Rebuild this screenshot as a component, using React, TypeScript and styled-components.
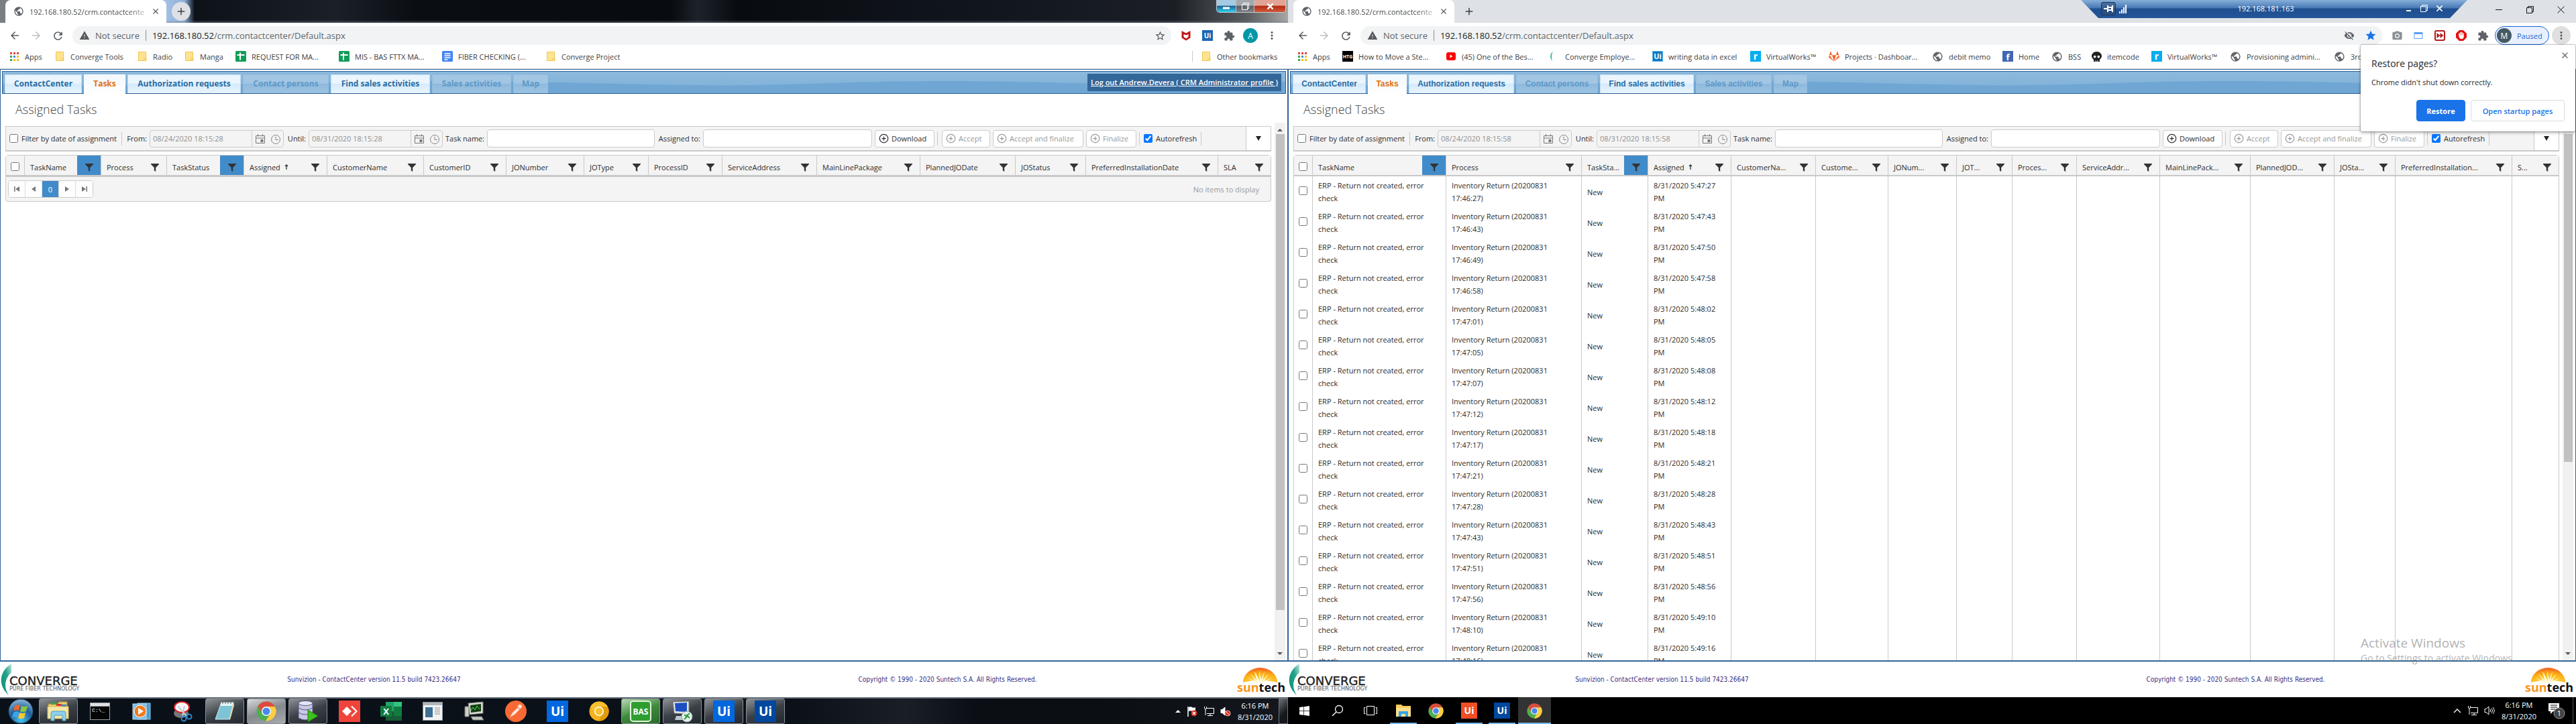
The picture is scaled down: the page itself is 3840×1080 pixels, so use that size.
import React from "react";
import styled, { createGlobalStyle, css } from "styled-components";
import {
  MdArrowBack, MdArrowForward, MdRefresh, MdWarning, MdStarBorder, MdStar, MdExtension, MdMoreVert,
  MdClose, MdAdd, MdVisibilityOff, MdPhotoCamera, MdPublic,
} from "react-icons/md";
import { FaGitlab, FaWindows, FaSkull } from "react-icons/fa";
import { CirclePlus } from "lucide-react";

const ui = '"Open Sans", "Noto Sans", sans-serif';
const navy = "#336699";
const line = "#c9c9c9";

const Global = createGlobalStyle`
  * { box-sizing: border-box; }
  html, body { margin: 0; background: #fff; }
  body { font: 11px/19px ${ui}; color: #2c2c2c; }
  button, input { font: inherit; }
  button { cursor: pointer; }
  svg { display: block; flex: none; }
`;

/* ---------- desktops ---------- */
const Desktops = styled.main`
  display: grid;
  grid-template-columns: minmax(0, 1fr) minmax(0, 1fr);
  height: 100vh;
  overflow: hidden;
`;
const Desktop = styled.section`
  position: relative;
  display: flex;
  flex-direction: column;
  min-width: 0;
  min-height: 0;
`;

/* ---------- tab strip ---------- */
const TabStrip = styled.header<{ $glass?: boolean }>`
  display: flex;
  flex: none;
  height: 34px;
  padding-left: 8px;
  background: ${(p) => p.$glass
    ? "linear-gradient(to bottom, transparent 30px, rgba(110,130,150,.5)), linear-gradient(90deg, #7b7e80 0, #7b7e80 8px, #a9c5e6 240px, #8fb0d8 275px, #0d1219 290px, #1b2028 500px, #0a0e13 620px, #080b0f 1000px, #1d222a 1040px, #080c11 1100px, #12171e 1500px, #1b1f25 1750px, #5b5e60 1860px, #a7a7a6 1920px)"
    : "#dee1e6"};
`;
const BrowserTab = styled.div`
  display: flex;
  align-items: center;
  gap: 8px;
  width: 240px;
  padding: 0 9px 0 12px;
  background: #fff;
  border-radius: 8px 8px 0 0;
  color: #45494d;
`;
const TabTitle = styled.span`
  flex: 1;
  white-space: nowrap;
  mask-image: linear-gradient(90deg, #000 85%, rgba(0, 0, 0, .3));
`;
const BareButton = styled.button`
  display: grid;
  place-items: center;
  padding: 0;
  border: 0;
  background: none;
  color: inherit;
`;
const NewTab = styled(BareButton)<{ $glass?: boolean }>`
  width: 28px;
  height: 28px;
  margin: 3px 0 0 8px;
  border-radius: 50%;
  background: ${(p) => (p.$glass ? "#dee1e6" : "transparent")};
  color: #3c4043;
`;
const Push = styled.span`flex: 1;`;

const AeroButtons = styled.div`
  display: flex;
  height: 19px;
  margin-right: 3px;
  border: 1px solid #c5cbd0;
  border-top: 0;
  border-radius: 0 0 5px 5px;
  overflow: hidden;
`;
const AeroButton = styled(BareButton)<{ $kind: "min" | "max" | "close" }>`
  width: ${(p) => ({ min: 29, max: 27, close: 46 })[p.$kind]}px;
  border-right: ${(p) => (p.$kind === "close" ? 0 : "1px solid #b9c0c6")};
  color: #fff;
  background: ${(p) => ({
    min: "linear-gradient(#a4cbe2 0 45%, #1b5f93 50%, #2fd0f0)",
    max: "linear-gradient(#a3a8ad 0 45%, #5a5f64 50%, #7d8185)",
    close: "linear-gradient(#e2a595 0 45%, #b52a12 50%, #cf5a3c)",
  })[p.$kind]};
`;
const FlatButtons = styled.div`
  display: flex;
  align-items: center;
  height: 28px;
  color: #111;
`;
const FlatButton = styled(BareButton)`
  width: 46px;
  height: 28px;
`;

/* ---------- browser toolbar ---------- */
const NavBar = styled.div`
  display: flex;
  flex: none;
  align-items: center;
  height: 36px;
  padding: 2px 8px 0 6px;
  background: #fff;
  color: #5f6368;
`;
const NavButton = styled(BareButton)<{ $faded?: boolean; $disc?: boolean }>`
  width: ${(p) => (p.$disc ? 28 : 32)}px;
  height: 28px;
  border-radius: 50%;
  color: ${(p) => (p.$faded ? "#bcbec0" : "#55595d")};
  background: ${(p) => (p.$disc ? "#dfdfdf" : "none")};
`;
const Omnibox = styled.div`
  display: flex;
  flex: 1;
  align-items: center;
  height: 28px;
  margin: 0 6px 0 6px;
  padding: 0 1px 0 10px;
  border-radius: 14px;
  background: #f1f3f4;
  font-size: 13px;
`;
const Secure = styled.span`
  padding: 0 9px 0 8px;
  border-right: 1px solid #8c9094;
  line-height: 16px;
  white-space: nowrap;
`;
const Address = styled.input`
  flex: 1;
  min-width: 0;
  padding: 0;
  border: 0;
  outline: 0;
  background: none;
  color: #5f6368;
`;
const AddressHost = styled.span`
  padding-left: 9px;
  color: #202124;
`;
const Extension = styled(BareButton)`
  width: 32px;
  height: 28px;
`;
const Avatar = styled.span<{ $color: string }>`
  display: grid;
  place-items: center;
  width: 22px;
  height: 22px;
  border-radius: 50%;
  background: ${(p) => p.$color};
  color: #fff;
  font-size: 12px;
`;
const Paused = styled.button`
  display: flex;
  align-items: center;
  gap: 8px;
  width: 81px;
  height: 28px;
  margin: 0 4px 0 2px;
  padding: 0 2px;
  border: 1px solid #1967d2;
  border-radius: 14px;
  background: #e8f0fe;
  color: #1967d2;
`;

/* ---------- bookmarks ---------- */
const Bookmarks = styled.nav`
  display: flex;
  flex: none;
  align-items: center;
  gap: 16px;
  height: 33px;
  padding: 0 14px 4px 13px;
  overflow: hidden;
  border-bottom: 1px solid #d4d6d8;
  background: #fff;
`;
const Bookmark = styled.a`
  display: flex;
  flex: none;
  align-items: center;
  gap: 8px;
  color: #3c4043;
  text-decoration: none;
  white-space: nowrap;
`;
const BookmarkText = styled.span<{ $w: number }>`
  width: ${(p) => p.$w}px;
`;
const BookmarkRule = styled.span`
  width: 1px;
  height: 16px;
  margin-right: -4px;
  background: #c6c9cc;
`;

/* ---------- application ---------- */
const Frame = styled.div`
  display: flex;
  flex: 1;
  flex-direction: column;
  min-height: 0;
  border: 1px solid ${navy};
  border-bottom-width: 2px;
  background: #fff;
`;
const AppTabs = styled.nav<{ $arial?: boolean }>`
  position: relative;
  display: flex;
  flex: none;
  align-items: flex-end;
  height: 34px;
  margin: 2px 2px 0;
  padding: 0 3px;
  border: 1px solid #2d6096;
  background: linear-gradient(#8cb9dc, #7eb0d8);
  font: bold 12px/26px ${(p) => (p.$arial ? '"Liberation Sans", Arial, sans-serif' : ui)};
`;
const WaveArt = styled.svg`
  position: absolute;
  inset: 0;
  width: 100%;
  height: 100%;
`;
const AppTab = styled.a<{ $state?: "active" | "off"; $w: number }>`
  position: relative;
  width: ${(p) => p.$w}px;
  height: 28px;
  margin-right: 3px;
  border: 1px solid #c4ddf2;
  border-bottom: 0;
  background: linear-gradient(#eaf5fe 0 45%, #d5eafb 50%, #e9f5ff);
  color: #2a6da3;
  text-align: center;
  text-decoration: none;
  white-space: nowrap;
  ${(p) => p.$state === "active" && css`
    height: 29px;
    margin-bottom: -1px;
    border-color: #fff;
    background: linear-gradient(#f2f8fd, #fff);
    color: #e2700d;
  `}
  ${(p) => p.$state === "off" && css`
    border-color: #93bddf;
    background: linear-gradient(#a3c6e3 0 45%, #8fbadd 50%, #9cc3e2);
    color: #5d99c8;
  `}
`;
const LogOut = styled.a`
  position: relative;
  align-self: center;
  height: 26px;
  margin: 0 3px 0 auto;
  padding: 0 5px;
  background: ${navy};
  color: #fff;
  font: 600 11px/26px ${ui};
  white-space: nowrap;
`;
const Heading = styled.h1`
  flex: none;
  height: 43px;
  margin: 0;
  padding-left: 22px;
  color: #444;
  font: 300 18px/46px ${ui};
`;
const ScrollArea = styled.div`
  display: flex;
  flex: 1;
  min-height: 0;
  padding-right: 3px;
  overflow: hidden;
`;
const ScrollBody = styled.div`
  flex: 1;
  min-width: 0;
  padding: 5px 5px 0 7px;
  overflow: hidden;
`;
const ScrollTrack = styled.div`
  display: flex;
  flex-direction: column;
  justify-content: space-between;
  align-items: center;
  width: 16px;
  padding: 7px 0 6px;
  background: #f1f1f1;
  color: #555;
`;
const ScrollThumb = styled.div<{ $share: number }>`
  flex: 0 0 ${(p) => p.$share}%;
  width: 13px;
  margin: 2px 0 auto;
  background: #c1c1c1;
`;

/* ---------- filter toolbar ---------- */
const FilterBar = styled.form`
  display: flex;
  align-items: center;
  gap: 4px;
  height: 38px;
  margin-bottom: 5px;
  padding-left: 5px;
  border: 1px solid ${line};
  border-bottom-width: 2px;
  background: #f4f4f4;
  white-space: nowrap;
`;
const Check = styled.input`
  flex: none;
  width: 13px;
  height: 13px;
  margin: 0;
`;
const CheckLabel = styled.label<{ $w: number }>`
  display: flex;
  flex: none;
  align-items: center;
  gap: 5px;
  width: ${(p) => p.$w}px;
  height: 20px;
  border-right: 1px solid ${line};
`;
const FieldLabel = styled.label<{ $w: number }>`
  flex: none;
  width: ${(p) => p.$w}px;
  text-align: right;
`;
const DateField = styled.span`
  display: flex;
  flex: 0 1 200px;
  align-items: center;
  height: 26px;
  border: 1px solid #ccc;
  border-radius: 4px;
  background: #f4f4f4;
`;
const DateInput = styled.input`
  flex: 1;
  min-width: 0;
  height: 24px;
  padding: 0 4px;
  border: 0;
  border-right: 1px solid #ccc;
  background: none;
  color: #909090;
`;
const PickerButton = styled(BareButton)`
  width: 23px;
  color: #777;
`;
const TextField = styled.input<{ $w: number }>`
  flex: 0 1 ${(p) => p.$w}px;
  min-width: 0;
  height: 27px;
  border: 1px solid #ccc;
  border-radius: 4px;
  background: #fff;
`;
const ActionButton = styled.button<{ $w: number }>`
  display: flex;
  flex: none;
  align-items: center;
  gap: 4px;
  width: ${(p) => p.$w}px;
  height: 26px;
  padding: 0 5px;
  border: 1px solid #ccc;
  border-radius: 4px;
  background: #fff;
  color: #2c2c2c;
  &:disabled { color: #999; }
`;
const Rule = styled.span`
  flex: none;
  width: 3px;
  height: 20px;
  border-left: 1px solid ${line};
`;
const MoreCell = styled(BareButton)`
  align-self: stretch;
  width: 37px;
  margin-left: auto;
  border-left: 1px solid ${line};
  background: #fff;
  color: #222;
`;

/* ---------- grid ---------- */
const Grid = styled.table`
  width: 100%;
  table-layout: fixed;
  border-collapse: separate;
  border-spacing: 0;
  border: 1px solid ${line};
  border-radius: 4px 4px 0 0;
`;
const HeadCell = styled.th`
  height: 31px;
  padding: 0;
  border-right: 1px solid ${line};
  border-bottom: 2px solid ${line};
  background: #f4f4f4;
  font-weight: 400;
  text-align: left;
  &:last-child { border-right: 0; }
`;
const HeadInner = styled.div`
  display: flex;
  align-items: center;
  height: 29px;
  padding-left: 8px;
`;
const HeadText = styled.span`
  display: flex;
  flex: 1;
  gap: 6px;
  min-width: 0;
  padding-top: 6px;
  white-space: nowrap;
`;
const FilterButton = styled(BareButton)<{ $on?: boolean }>`
  flex: none;
  width: 35px;
  height: 29px;
  padding-top: 7px;
  background: ${(p) => (p.$on ? "#428bca" : "none")};
  color: #333;
`;
const Cell = styled.td`
  height: 46px;
  padding: 4px 8px;
  border-right: 1px solid ${line};
  vertical-align: middle;
  &:last-child { border-right: 0; }
  &:first-child { text-align: center; padding: 0; }
`;
const CenterCheck = styled.div`
  display: grid;
  place-items: center;
  width: 27px;
  height: 29px;
  padding-top: 4px;
`;
const Pager = styled.div`
  display: flex;
  align-items: center;
  height: 37px;
  padding: 0 17px 0 3px;
  border: 1px solid ${line};
  border-top: 0;
  border-radius: 0 0 4px 4px;
  background: #f4f4f4;
  color: #999;
`;
const PageButtons = styled.div`
  display: flex;
  margin-right: auto;
  border: 1px solid #ccc;
  border-radius: 4px;
  background: #fff;
  overflow: hidden;
`;
const PageButton = styled(BareButton)<{ $on?: boolean }>`
  width: 25px;
  height: 24px;
  border-right: 1px solid #ddd;
  background: ${(p) => (p.$on ? "#428bca" : "#fdfdfd")};
  color: ${(p) => (p.$on ? "#fff" : "#777")};
  &:last-child { border-right: 0; }
`;

/* ---------- page footer ---------- */
const Footer = styled.footer`
  display: grid;
  flex: none;
  grid-template-columns: 130px 1fr 1fr 80px;
  align-items: center;
  height: 53px;
  background: #fff;
  color: #3a2f82;
  font: 10px/14px "DejaVu Sans Condensed", "DejaVu Sans", sans-serif;
  text-align: center;
`;

/* ---------- taskbars ---------- */
const SevenBar = styled.footer`
  display: flex;
  flex: none;
  align-items: center;
  gap: 4px;
  height: 40px;
  padding-left: 8px;
  border-top: 2px solid #66707c;
  background: linear-gradient(90deg, #0a1018 0, #0b1119 1180px, #1a1f27 1350px, #0b0f15 1450px, #0b0f14 1650px, #14181e);
  color: #fff;
`;
const Orb = styled(BareButton)`
  width: 46px;
`;
const SevenSlot = styled(BareButton)<{ $open?: boolean; $lit?: boolean; $green?: boolean }>`
  width: 58px;
  height: 38px;
  border-radius: 3px;
  ${(p) => p.$open && css`
    border: 1px solid #8b9095;
    background: linear-gradient(160deg, #8d9196, #3b4046 50%, #23282e);
  `}
  ${(p) => p.$lit && css`background: linear-gradient(160deg, #d9dbdd, #85898d 50%, #a9acaf);`}
  ${(p) => p.$green && css`background: linear-gradient(160deg, #b7dcb4, #3f8a3d 50%, #2a6b2b);`}
`;
const Clock = styled.time`
  font: 11px/17px ${ui};
  text-align: center;
  white-space: nowrap;
`;
const Tray = styled.div<{ $gap: number }>`
  display: flex;
  align-items: center;
  gap: ${(p) => p.$gap}px;
  height: 100%;
  margin-left: auto;
`;
const ShowDesktop = styled(BareButton)`
  width: 14px;
  height: 38px;
  border: 1px solid #70757b;
  background: linear-gradient(135deg, #6b6f74, #14181d 60%);
`;
const TenBar = styled.footer`
  display: flex;
  flex: none;
  height: 40px;
  background: #000;
  color: #fff;
`;
const TenSlot = styled(BareButton)<{ $open?: boolean; $focus?: boolean }>`
  width: 49px;
  height: 40px;
  background: ${(p) => (p.$focus ? "#333" : "none")};
  box-shadow: ${(p) => (p.$focus ? "inset 0 -2px #76b9ed" : "none")};
  ${(p) => p.$open && css`
    background: linear-gradient(#76b9ed, #76b9ed) center bottom / 40px 2px no-repeat;
  `}
`;
const Peek = styled.span`
  width: 5px;
  height: 40px;
  border-left: 1px solid #555;
`;

/* ---------- overlays ---------- */
const RemoteBar = styled.div`
  position: absolute;
  top: 0;
  right: 162px;
  display: flex;
  align-items: center;
  width: 576px;
  height: 27px;
  padding: 0 30px 2px;
  background: linear-gradient(#86afd9, #4778b4 44%, #1f4f8f 48%, #24559a);
  clip-path: polygon(0 0, 100% 0, calc(100% - 26px) 100%, 26px 100%);
  color: #fff;
`;
const PinButton = styled(BareButton)`
  width: 22px;
  height: 20px;
  border: 1px solid #1d3557;
  border-radius: 3px;
  background: rgba(50, 80, 120, .6);
`;
const RemoteName = styled.span`
  flex: 1;
  text-align: center;
`;
const RemoteButton = styled(BareButton)`
  width: 23px;
  height: 20px;
`;
const Popup = styled.aside`
  position: absolute;
  top: 67px;
  right: 1px;
  width: 320px;
  padding: 18px 16px 15px;
  border-radius: 2px;
  background: #fff;
  box-shadow: 0 0 2px rgba(0, 0, 0, .6), 0 2px 5px rgba(0, 0, 0, .3);
  color: #27292c;
`;
const PopupTitle = styled.h2`
  margin: 0 0 8px;
  font: 400 14px/20px ${ui};
`;
const PopupText = styled.p`
  margin: 0 0 16px;
  font-size: 11px;
  line-height: 20px;
`;
const PopupClose = styled(BareButton)`
  position: absolute;
  top: 6px;
  right: 7px;
  width: 18px;
  height: 18px;
  color: #5f6368;
`;
const PopupActions = styled.div`
  display: flex;
  justify-content: flex-end;
  gap: 8px;
`;
const PopupButton = styled.button<{ $primary?: boolean }>`
  width: ${(p) => (p.$primary ? 73 : 140)}px;
  height: 32px;
  padding: 0;
  border: 1px solid ${(p) => (p.$primary ? "#1a73e8" : "#dadce0")};
  border-radius: 4px;
  background: ${(p) => (p.$primary ? "#1a73e8" : "#fff")};
  color: ${(p) => (p.$primary ? "#fff" : "#1a73e8")};
  font-size: 11px;
  font-weight: ${(p) => (p.$primary ? 700 : 600)};
`;
const Watermark = styled.div`
  position: absolute;
  right: 86px;
  bottom: 88px;
  width: 235px;
  color: rgba(110, 110, 110, .55);
  font: 14px/20px ${ui};
  white-space: nowrap;
  pointer-events: none;
`;
const WatermarkTitle = styled.div`
  font-size: 19px;
  line-height: 26px;
`;

/* ---------- small drawings ---------- */
const Folder = () => (
  <svg width="16" height="16" viewBox="0 0 16 16"><path d="M2.500 1.500h11v9.500h.5v3.500h-11.500z" fill="#ffe391" stroke="#eec74c" /><path d="M11 11h2.500v3.500h-3z" fill="#ffe9a8" stroke="#eec74c" /></svg>
);
const AppsDots = () => (
  <svg width="16" height="16" viewBox="0 0 16 16">
    {["#ea4335", "#ea4335", "#ea4335", "#34a853", "#4285f4", "#fbbc05", "#34a853", "#fbbc05", "#fbbc05"].map((c, i) => (
      <rect key={i} x={2 + (i % 3) * 5} y={2 + Math.floor(i / 3) * 5} width="3" height="3" fill={c} />
    ))}
  </svg>
);
const Sheet = () => (
  <svg width="16" height="16" viewBox="0 0 16 16"><rect width="16" height="16" rx="1.500" fill="#109d58" /><path d="M7 2.500v11M2.500 6h11" stroke="#fff" strokeWidth="2" /></svg>
);
const Docs = () => (
  <svg width="16" height="16" viewBox="0 0 16 16"><rect width="16" height="16" rx="1.500" fill="#4285f4" /><path d="M3.500 4h9M3.500 7h9M3.500 10h9M3.500 13h5" stroke="#fff" strokeWidth="1.500" /></svg>
);
const Tube = () => (
  <svg width="16" height="16" viewBox="0 0 16 16"><rect x="1" y="2" width="14" height="12" rx="3" fill="#f00" /><path d="M6.500 5.500v5l4-2.500z" fill="#fff" /></svg>
);
const Leaf = () => (
  <svg width="16" height="16" viewBox="0 0 16 16"><path d="M6 1C1 4 1 11 5 15C3.500 10 3.500 5 6 1z" fill="#2bb39b" /></svg>
);
const Badge = ({ text, bg, fg = "#fff", size = 16, fs = 11, outline, dy = 0 }: { text: string; bg: string; fg?: string; size?: number; fs?: number; outline?: string; dy?: number }) => (
  <svg width={size} height={size} viewBox={`0 0 ${size} ${size}`}>
    <rect width={size} height={size} fill={outline ?? bg} />
    {outline && <rect x="1" y="1" width={size - 2} height={size - 2} fill={bg} />}
    <text x={size / 2} y={size / 2 + fs * 0.36 + dy} textAnchor="middle" fontFamily="Open Sans, sans-serif" fontWeight="700" fontSize={fs} fill={fg}>{text}</text>
  </svg>
);
const Funnel = () => (
  <svg width="12" height="12" viewBox="0 0 12 12"><path d="M0 0h12v1L7.200 6v6L4.800 10.500V6L0 1z" fill="#333" /></svg>
);
const SortUp = () => (
  <svg width="6" height="19" viewBox="0 0 6 19"><path d="M3 13V6M1 8l2-2 2 2" fill="none" stroke="#333" strokeWidth="1.300" /></svg>
);
const CalendarGlyph = () => (
  <svg width="16" height="16" viewBox="0 0 16 16" fill="none" stroke="#777"><path d="M1.500 3.500h13v11h-13zM1.500 7h13M4.500 1v3.500M11.500 1v3.500" /><rect x="9" y="9.500" width="3" height="3" fill="#777" /></svg>
);
const ClockGlyph = () => (
  <svg width="16" height="16" viewBox="0 0 16 16" fill="none" stroke="#888"><circle cx="8" cy="9" r="6.500" /><path d="M8 5v4.500h4" /></svg>
);
const Arrow = ({ d, w = 8 }: { d: string; w?: number }) => (
  <svg width={w} height="8" viewBox={`0 0 ${w} 8`}><path d={d} fill="currentColor" /></svg>
);
const Restore = () => (
  <svg width="11" height="11" viewBox="0 0 11 11" fill="none" stroke="currentColor"><path d="M.5 2.500h8v8h-8zM2.500 2.500v-2h8v8h-2" /></svg>
);
const Minus = ({ w = 10, s = 1 }: { w?: number; s?: number }) => (
  <svg width={w} height="10" viewBox={`0 0 ${w} 10`}><path d={`M0 ${s > 1 ? 8 : 5.5}h${w}`} stroke="currentColor" strokeWidth={s} /></svg>
);
const Cross = ({ s = 1, w = 11 }: { s?: number; w?: number }) => (
  <svg width={w} height={w} viewBox="0 0 11 11"><path d="M.5.5l10 10M10.500.5l-10 10" stroke="currentColor" strokeWidth={s} /></svg>
);
const Shield = () => (
  <svg width="16" height="16" viewBox="0 0 16 16"><path d="M1.500 1L8 4.500 14.500 1v10.500L8 15.500 1.500 11.500z" fill="#c01818" /><path d="M4.500 6L8 7.500 11.500 6v4L8 12.500 4.500 10z" fill="#fff" /></svg>
);
const PanelIcon = () => (
  <svg width="14" height="12" viewBox="0 0 14 12"><rect x="1" y="1.500" width="12" height="9" fill="#fff" stroke="#5b9df5" /><path d="M1 3h12" stroke="#5b9df5" strokeWidth="2" /></svg>
);
const FastIcon = () => (
  <svg width="16" height="16" viewBox="0 0 16 16"><rect x="1" y="1" width="14" height="14" rx="2" fill="#fff" stroke="#b01c1c" strokeWidth="2" /><path d="M3.500 4l5 4-5 4zM8.500 4l5 4-5 4z" fill="#b01c1c" /></svg>
);
const StopHand = () => (
  <svg width="16" height="16" viewBox="0 0 16 16"><path d="M5 0h6l5 5v6l-5 5H5l-5-5V5z" fill="#e60f0f" /><path d="M5 8V5M7 7.500V3.500M9 7.500V3.500M11 8V5" stroke="#fff" strokeWidth="1.500" strokeLinecap="round" /><path d="M4.300 7.500h7.500v2c0 5-6 4.500-7 1z" fill="#fff" /></svg>
);
const ChromeIcon = ({ size = 30, mono }: { size?: number; mono?: boolean }) => (
  <svg width={size} height={size} viewBox="0 0 30 30">
    <circle cx="15" cy="15" r="14.500" fill={mono ? "#f6b21a" : "#4caf50"} />
    <path d="M2.500 7.700A14.500 14.500 0 0 1 27.700 8H15a7 7 0 0 0-6.300 10z" fill={mono ? "#fbc02d" : "#dd4b3e"} />
    <path d="M27.700 8A14.500 14.500 0 0 1 14 29.500L21.200 18A7 7 0 0 0 15 8z" fill={mono ? "#e39b0c" : "#ffcd42"} />
    <circle cx="15" cy="15" r="7" fill="#fff" />
    <circle cx="15" cy="15" r="5.500" fill={mono ? "#f9bf2f" : "#4a87ee"} />
  </svg>
);
const ConvergeLogo = () => (
  <svg width="130" height="52" viewBox="0 0 130 52">
    <defs><linearGradient id="leaf" x1="0" y1="1" x2="1" y2="0"><stop offset="0" stopColor="#0c8f78" /><stop offset=".6" stopColor="#22a38b" /><stop offset="1" stopColor="#c4e8df" /></linearGradient></defs>
    <path d="M17 2C-1 13-4 34 13 49C5 37 7 24 17 15z" fill="url(#leaf)" />
    <text x="14" y="34" fontFamily="DejaVu Sans, sans-serif" fontSize="18" fill="#222" stroke="#222" strokeWidth=".4">CONVERGE</text>
    <text x="14" y="42" fontFamily="DejaVu Sans, sans-serif" fontSize="8" fill="#555">PURE FIBER TECHNOLOGY</text>
  </svg>
);
const SuntechLogo = () => (
  <svg width="80" height="52" viewBox="0 0 80 52">
    <defs><radialGradient id="sun" cx=".5" cy="1" r="1"><stop offset="0" stopColor="#ffe94a" /><stop offset=".6" stopColor="#fbae17" /><stop offset="1" stopColor="#f15a22" /></radialGradient></defs>
    <path d="M13 30A25.500 22 0 0 1 64 30C50 26 27 26 13 30z" fill="url(#sun)" />
    <path d="M38 28L37 11l3 15 5-13-3 14 9-10-7 11 12-5-12 7H31l-12-7 12 5-7-11 9 10-3-14z" fill="#fff9d8" />
    <text x="4" y="44" fontFamily="Open Sans, sans-serif" fontWeight="700" fontSize="18" fill="#f7941d">sun<tspan fill="#111">tech</tspan></text>
  </svg>
);
const StartOrb = () => (
  <svg width="38" height="38" viewBox="0 0 38 38">
    <defs><radialGradient id="orb" cx=".5" cy=".85" r=".9"><stop offset="0" stopColor="#45c8f3" /><stop offset=".5" stopColor="#1d5e9c" /><stop offset="1" stopColor="#9cc3dc" /></radialGradient></defs>
    <circle cx="19" cy="19" r="18" fill="url(#orb)" stroke="#26415c" />
    <path d="M10 11q4-3 8-1l-2 8q-4-2-8 1z" fill="#f0652b" /><path d="M20 11q4 2 9 0l-2 8q-5 2-9 0z" fill="#8cc63e" />
    <path d="M8 21q4-3 8-1l-2 8q-4-2-8 1z" fill="#3ea6e8" /><path d="M17 21q4 2 9 0l-2 8q-5 2-9 0z" fill="#fdc72e" />
  </svg>
);
const Explorer = ({ flat }: { flat?: boolean }) => flat ? (
  <svg width="24" height="24" viewBox="0 0 24 24"><path d="M1 3h8l2 2h12v16H1z" fill="#f9cd59" /><path d="M1 8h22v13H1z" fill="#fde08d" /><path d="M5 13h14v8h-4v-4H9v4H5z" fill="#34a4e6" /></svg>
) : (
  <svg width="34" height="32" viewBox="0 0 34 32"><path d="M2 5h14l2-3h12v24H2z" fill="#e9c96b" stroke="#b3923a" /><path d="M6 3h8v3H6z" fill="#3da33d" /><path d="M14 5h8v3h-8z" fill="#d33" /><path d="M22 6h7v3h-7z" fill="#3a7fd0" /><path d="M1 9h31v18H1z" fill="#f7e6a3" stroke="#d3b55c" /><path d="M6 30V19q0-3 3-3h16q3 0 3 3v11h-5v-8H11v8z" fill="#8fd0ee" stroke="#4b9cc4" /></svg>
);
const Cmd = () => (
  <svg width="30" height="26" viewBox="0 0 30 26"><rect width="30" height="26" fill="#9aa0a6" /><rect x="1" y="1" width="28" height="4" fill="#dfe2e5" /><rect x="1" y="6" width="28" height="19" fill="#050505" /><text x="3" y="14" fontFamily="Liberation Mono, monospace" fontSize="8" fill="#fff">C:\_</text></svg>
);
const Media = () => (
  <svg width="28" height="28" viewBox="0 0 28 28"><rect x="8" y="2" width="19" height="24" fill="#4f9ccd" stroke="#8cc7ea" /><rect x="1" y="3" width="20" height="23" fill="#7fbde3" stroke="#b8e0f5" /><circle cx="12" cy="14" r="9" fill="#f07c1d" stroke="#fff" /><path d="M9 9v10l8-5z" fill="#fff" /></svg>
);
const Snip = () => (
  <svg width="32" height="32" viewBox="0 0 32 32"><ellipse cx="13" cy="19" rx="11" ry="7" fill="#777" /><ellipse cx="14" cy="10" rx="11" ry="8" fill="#f6f6f6" stroke="#d22" strokeWidth="2" /><path d="M8 8l13 15M18 8l-3 16" stroke="#c4ccd2" strokeWidth="2" /><circle cx="17" cy="27" r="3.500" fill="none" stroke="#2f85cf" strokeWidth="2" /><circle cx="25" cy="24" r="3.500" fill="none" stroke="#2f85cf" strokeWidth="2" /></svg>
);
const Notepad = () => (
  <svg width="34" height="32" viewBox="0 0 34 32"><path d="M12 3h18l-6 25H3z" fill="#7fc4d6" stroke="#cfeaf2" /><path d="M30 3l1 4-6 22-1-1z" fill="#e8d9a0" /><path d="M12 3h18l-2 5H10z" fill="#e4f4f8" /><path d="M14 1v4M18 1v4M22 1v4M26 1v4" stroke="#555" /></svg>
);
const Database = () => (
  <svg width="34" height="34" viewBox="0 0 34 34"><path d="M3 5v22q10 6 21 0V5z" fill="#c9c8e2" stroke="#55558a" /><ellipse cx="13.500" cy="5" rx="10.500" ry="3.500" fill="#e6e5f4" stroke="#55558a" /><path d="M3 12q10 6 21 0M3 19q10 6 21 0" fill="none" stroke="#55558a" /><path d="M17 15v18l15-9z" fill="#3fbf1f" stroke="#1f7a10" /></svg>
);
const AnyDesk = () => (
  <svg width="32" height="32" viewBox="0 0 32 32"><rect width="32" height="32" fill="#ef443b" /><path d="M12 9l7 7-7 7-7-7z" fill="#fff" /><path d="M18 9l2-1 8 8-8 8-2-1 7-7z" fill="#fff" /></svg>
);
const Excel = () => (
  <svg width="32" height="28" viewBox="0 0 32 28"><rect x="8" width="24" height="28" fill="#21a366" /><rect x="20" width="12" height="14" fill="#33c481" /><rect x="8" y="14" width="24" height="14" fill="#185c37" /><rect x="20" y="7" width="12" height="14" fill="#107c41" /><rect y="6" width="17" height="16" fill="#107c41" /><text x="8.500" y="19" textAnchor="middle" fontFamily="Open Sans, sans-serif" fontWeight="700" fontSize="13" fill="#fff">X</text></svg>
);
const WindowIcon = () => (
  <svg width="30" height="28" viewBox="0 0 30 28"><rect x=".5" y=".5" width="29" height="27" fill="#f1f2f3" stroke="#8c9297" /><path d="M1 3h28" stroke="#aeb6bd" strokeWidth="4" /><rect x="4" y="8" width="11" height="15" fill="#3d6f95" /><path d="M18 9h8M18 12h8M18 15h8M18 18h8" stroke="#888" /></svg>
);
const Monitor = () => (
  <svg width="32" height="30" viewBox="0 0 32 30"><path d="M7 3l22-2v17l-20 2z" fill="#d9dbd3" stroke="#777" /><path d="M10 6l16-2v11l-15 2z" fill="#123d12" /><path d="M11 14l3-5 3 4 3-6 4 5" fill="none" stroke="#4ce04c" /><path d="M2 8h6v15H2z" fill="#cfd1c9" stroke="#777" /><path d="M11 23h16l3 5H14z" fill="#c6c9c2" stroke="#777" /></svg>
);
const Postman = () => (
  <svg width="32" height="32" viewBox="0 0 32 32"><circle cx="16" cy="16" r="16" fill="#f76935" /><path d="M7 25l4-7 8-8 3 3-8 8z" fill="#fde4d8" /><circle cx="22" cy="9" r="3.500" fill="#fde4d8" stroke="#f76935" /></svg>
);
const RemotePc = () => (
  <svg width="34" height="34" viewBox="0 0 34 34"><path d="M3 3l24-1v19L5 20z" fill="#e4e8ee" stroke="#777" /><path d="M6 5l18-1v14L7 17z" fill="#1d4fc4" /><path d="M8 24h14l2 6H6z" fill="#c2c8cf" /><circle cx="24" cy="25" r="8" fill="#e8eef0" stroke="#8a9" /><path d="M20 22l4 3-4 4M28 20l-4 3 4 4" fill="none" stroke="#2c9b3c" strokeWidth="2" /></svg>
);
const FlagGlyph = () => (
  <svg width="16" height="18" viewBox="0 0 16 18"><path d="M2 2v15" stroke="#fff" strokeWidth="1.500" /><path d="M3 3q3-1.500 5 0t5 0v6q-3 1.500-5 0T3 9z" fill="#fff" /><circle cx="11" cy="12" r="4.500" fill="#d52b1e" /><path d="M9 10l4 4M13 10l-4 4" stroke="#fff" strokeWidth="1.500" /></svg>
);
const NetGlyph = () => (
  <svg width="16" height="16" viewBox="0 0 16 16" fill="none" stroke="#fff"><path d="M5 3.500h10.500v8H5M10 11.500v3M6 14.500h8M1.500 1v3q1.500 2 3 0V1M3 5v9" /></svg>
);
const SoundGlyph = ({ muted }: { muted?: boolean }) => (
  <svg width="17" height="16" viewBox="0 0 17 16" fill="none" stroke="#fff"><path d="M1 5.500h2L7 2v12l-4-3.500H1z" fill={muted ? "#fff" : "none"} />{muted ? <g><circle cx="11" cy="11" r="4" fill="#d52b1e" stroke="#f2b5af" /><path d="M8.500 8.500l5 5" /></g> : <path d="M9 6q1.500 2 0 4M11 4.500q3 3.500 0 7M13 3q4.500 5 0 10" />}</svg>
);

/* ---------- data ---------- */
const globe = <MdPublic size={17} color="#5f6368" />;
type Mark = [React.ReactNode, string, number];
const leftMarks: Mark[] = [
  [<AppsDots />, "Apps", 28], [<Folder />, "Converge Tools", 83], [<Folder />, "Radio", 30], [<Folder />, "Manga", 37],
  [<Sheet />, "REQUEST FOR MA...", 114], [<Sheet />, "MIS - BAS FTTX MA...", 114], [<Docs />, "FIBER CHECKING (...", 114], [<Folder />, "Converge Project", 92],
];
const rightMarks: Mark[] = [
  [<AppsDots />, "Apps", 28], [<Badge text="HTG" bg="#000" fs={7} />, "How to Move a Ste...", 114], [<Tube />, "(45) One of the Bes...", 114],
  [<Leaf />, "Converge Employe...", 114], [<Badge text="Ui" bg="#0c79c1" outline="#5ab2e8" />, "writing data in excel", 106], [<Badge text="r" bg="#00adef" fs={14} />, "VirtualWorks™", 77],
  [<FaGitlab size={16} color="#f4622a" />, "Projects · Dashboar...", 114], [globe, "debit memo", 64], [<Badge text="f" bg="#4267b2" fs={13} dy={1} />, "Home", 33],
  [globe, "BSS", 19], [<FaSkull size={15} color="#222" />, "itemcode", 50], [<Badge text="r" bg="#00adef" fs={14} />, "VirtualWorks™", 77],
  [globe, "Provisioning admini...", 114], [globe, "3rd", 20],
];

type Col = { name: string; w: number; on?: boolean; sort?: boolean };
const leftCols: Col[] = [
  { name: "TaskName", w: 114, on: true }, { name: "Process", w: 98 }, { name: "TaskStatus", w: 115, on: true }, { name: "Assigned", w: 124, sort: true },
  { name: "CustomerName", w: 144 }, { name: "CustomerID", w: 123 }, { name: "JONumber", w: 116 }, { name: "JOType", w: 96 }, { name: "ProcessID", w: 110 },
  { name: "ServiceAddress", w: 141 }, { name: "MainLinePackage", w: 154 }, { name: "PlannedJODate", w: 142 }, { name: "JOStatus", w: 105 },
  { name: "PreferredInstallationDate", w: 197 }, { name: "SLA", w: 78 },
];
const rightCols: Col[] = [
  { name: "TaskName", w: 199, on: true }, { name: "Process", w: 202 }, { name: "TaskSta...", w: 99, on: true }, { name: "Assigned", w: 124, sort: true },
  { name: "CustomerNa...", w: 126 }, { name: "Custome...", w: 108 }, { name: "JONum...", w: 102 }, { name: "JOT...", w: 83 }, { name: "Proces...", w: 96 },
  { name: "ServiceAddr...", w: 124 }, { name: "MainLinePack...", w: 135 }, { name: "PlannedJOD...", w: 125 }, { name: "JOSta...", w: 91 },
  { name: "PreferredInstallation...", w: 174 }, { name: "S...", w: 69 },
];
const rows: [string, string][] = [
  ["17:46:27", "5:47:27"], ["17:46:43", "5:47:43"], ["17:46:49", "5:47:50"], ["17:46:58", "5:47:58"], ["17:47:01", "5:48:02"], ["17:47:05", "5:48:05"],
  ["17:47:07", "5:48:08"], ["17:47:12", "5:48:12"], ["17:47:17", "5:48:18"], ["17:47:21", "5:48:21"], ["17:47:28", "5:48:28"], ["17:47:43", "5:48:43"],
  ["17:47:51", "5:48:51"], ["17:47:56", "5:48:56"], ["17:48:10", "5:49:10"], ["17:48:16", "5:49:16"],
];
type AppTabData = [string, number, ("active" | "off")?];
const leftTabs: AppTabData[] = [["ContactCenter", 115], ["Tasks", 62, "active"], ["Authorization requests", 169], ["Contact persons", 128, "off"], ["Find sales activities", 148], ["Sales activities", 118, "off"], ["Map", 52, "off"]];
const rightTabs: AppTabData[] = [["ContactCenter", 109], ["Tasks", 58, "active"], ["Authorization requests", 157], ["Contact persons", 122, "off"], ["Find sales activities", 140], ["Sales activities", 113, "off"], ["Map", 50, "off"]];

/* ---------- assembled parts ---------- */
const BookmarkItem = ({ mark: [icon, text, w] }: { mark: Mark }) => (
  <Bookmark href="#">{icon}<BookmarkText $w={w}>{text}</BookmarkText></Bookmark>
);

const AddressLine = ({ id }: { id: string }) => (
  <>
    <NavButton aria-label="Back"><MdArrowBack size={18} /></NavButton>
    <NavButton aria-label="Forward" $faded><MdArrowForward size={18} /></NavButton>
    <NavButton aria-label="Reload"><MdRefresh size={19} /></NavButton>
    <Omnibox>
      <MdWarning size={16} color="#54585c" />
      <Secure>Not secure</Secure>
      <AddressHost>192.168.180.52</AddressHost>
      <Address aria-label="Address" id={`${id}-address`} defaultValue="/crm.contactcenter/Default.aspx" />
      {id === "right" ? <Extension aria-label="Cookies"><MdVisibilityOff size={16} /></Extension> : null}
      <NavButton aria-label="Bookmark this page">
        {id === "right" ? <MdStar size={18} color="#1a73e8" /> : <MdStarBorder size={17} />}
      </NavButton>
    </Omnibox>
  </>
);

const DateTimeField = ({ id, label, value, w }: { id: string; label: string; value: string; w: number }) => (
  <>
    <FieldLabel htmlFor={id} $w={w}>{label}</FieldLabel>
    <DateField>
      <DateInput id={id} defaultValue={value} disabled />
      <PickerButton type="button" aria-label="Pick date"><CalendarGlyph /></PickerButton>
      <PickerButton type="button" aria-label="Pick time"><ClockGlyph /></PickerButton>
    </DateField>
  </>
);

const Action = ({ text, w, disabled }: { text: string; w: number; disabled?: boolean }) => (
  <ActionButton type="button" $w={w} disabled={disabled}><CirclePlus size={15} strokeWidth={2} />{text}</ActionButton>
);

const Filters = ({ id, seconds }: { id: string; seconds: string }) => (
  <FilterBar>
    <CheckLabel $w={168}><Check type="checkbox" />Filter by date of assignment</CheckLabel>
    <DateTimeField id={`${id}-from`} label="From:" value={`08/24/2020 18:15:${seconds}`} w={33} />
    <DateTimeField id={`${id}-until`} label="Until:" value={`08/31/2020 18:15:${seconds}`} w={29} />
    <FieldLabel htmlFor={`${id}-task`} $w={58}>Task name:</FieldLabel>
    <TextField id={`${id}-task`} $w={250} />
    <FieldLabel htmlFor={`${id}-to`} $w={64}>Assigned to:</FieldLabel>
    <TextField id={`${id}-to`} $w={252} />
    <Action text="Download" w={89} />
    <Rule />
    <Action text="Accept" w={72} disabled />
    <Action text="Accept and finalize" w={135} disabled />
    <Action text="Finalize" w={75} disabled />
    <Rule />
    <CheckLabel $w={86}><Check type="checkbox" defaultChecked />Autorefresh</CheckLabel>
    <MoreCell type="button" aria-label="More"><Arrow d="M0 0h8L4 7z" /></MoreCell>
  </FilterBar>
);

const TaskGrid = ({ cols, withRows }: { cols: Col[]; withRows?: boolean }) => (
  <Grid>
    <colgroup>
      <col width={28} />
      {cols.map((c) => <col key={c.name} width={c.w} />)}
    </colgroup>
    <thead>
      <tr>
        <HeadCell><CenterCheck><Check type="checkbox" aria-label="Select all" /></CenterCheck></HeadCell>
        {cols.map((c) => (
          <HeadCell key={c.name} scope="col">
            <HeadInner>
              <HeadText>{c.name}{c.sort && <SortUp />}</HeadText>
              <FilterButton $on={c.on} aria-label={`Filter ${c.name}`}><Funnel /></FilterButton>
            </HeadInner>
          </HeadCell>
        ))}
      </tr>
    </thead>
    {withRows && (
      <tbody>
        {rows.map(([made, assigned]) => (
          <tr key={made}>
            <Cell><Check type="checkbox" aria-label={`Select ${made}`} /></Cell>
            <Cell>ERP - Return not created, error<br />check</Cell>
            <Cell>Inventory Return (20200831<br />{made})</Cell>
            <Cell>New</Cell>
            <Cell>8/31/2020 {assigned}<br />PM</Cell>
            {cols.slice(4).map((c) => <Cell key={c.name} />)}
          </tr>
        ))}
      </tbody>
    )}
  </Grid>
);

const ContactCenter = ({ id, tabs, seconds, cols, thumb, children, logout }: {
  id: string; tabs: AppTabData[]; seconds: string; cols: Col[]; thumb: number; children?: React.ReactNode; logout?: boolean;
}) => (
  <>
    <Frame>
      <AppTabs $arial={id === "right"}>
        <WaveArt viewBox="0 0 1914 32" preserveAspectRatio="none" aria-hidden>
          <path d="M0 18C300 26 500 10 830 16C1000 20 1080 22 1200 18S1420 12 1600 17S1830 20 1914 15V32H0z" fill="#6fa6d3" />
        </WaveArt>
        {tabs.map(([text, w, state]) => <AppTab key={text} href="#" $w={w} $state={state}>{text}</AppTab>)}
        {logout && <LogOut href="#">Log out Andrew.Devera ( CRM Administrator profile )</LogOut>}
      </AppTabs>
      <Heading>Assigned Tasks</Heading>
      <ScrollArea>
        <ScrollBody>
          <Filters id={id} seconds={seconds} />
          <TaskGrid cols={cols} withRows={id === "right"} />
          {children}
        </ScrollBody>
        <ScrollTrack>
          <Arrow d="M0 6h8L4 2z" />
          <ScrollThumb $share={thumb} />
          <Arrow d="M0 2h8L4 6z" />
        </ScrollTrack>
      </ScrollArea>
    </Frame>
    <Footer>
      <ConvergeLogo />
      <span>Sunvizion - ContactCenter version 11.5 build 7423.26647</span>
      <span>Copyright © 1990 - 2020 Suntech S.A. All Rights Reserved.</span>
      <SuntechLogo />
    </Footer>
  </>
);

const LeftTaskbar = () => (
  <SevenBar>
    <Orb aria-label="Start"><StartOrb /></Orb>
    <SevenSlot $open aria-label="Explorer"><Explorer /></SevenSlot>
    <SevenSlot aria-label="Command prompt"><Cmd /></SevenSlot>
    <SevenSlot aria-label="Media player"><Media /></SevenSlot>
    <SevenSlot aria-label="Snipping tool"><Snip /></SevenSlot>
    <SevenSlot $open aria-label="Notepad"><Notepad /></SevenSlot>
    <SevenSlot $open $lit aria-label="Chrome"><ChromeIcon /></SevenSlot>
    <SevenSlot $open aria-label="Database"><Database /></SevenSlot>
    <SevenSlot aria-label="AnyDesk"><AnyDesk /></SevenSlot>
    <SevenSlot aria-label="Excel"><Excel /></SevenSlot>
    <SevenSlot aria-label="Window"><WindowIcon /></SevenSlot>
    <SevenSlot aria-label="Monitor"><Monitor /></SevenSlot>
    <SevenSlot aria-label="Postman"><Postman /></SevenSlot>
    <SevenSlot aria-label="UiPath Assistant"><Badge text="Ui" bg="#0067df" size={32} fs={19} /></SevenSlot>
    <SevenSlot aria-label="Chrome Canary"><ChromeIcon mono /></SevenSlot>
    <SevenSlot $open $green aria-label="BAS">
      <svg width="32" height="32" viewBox="0 0 32 32"><rect x="1" y="1" width="30" height="30" rx="4" fill="#2f9e2f" stroke="#dff3dc" strokeWidth="2" /><text x="16" y="21" textAnchor="middle" fontFamily="Open Sans, sans-serif" fontSize="12" fontWeight="700" fill="#fff">BAS</text></svg>
    </SevenSlot>
    <SevenSlot $open aria-label="Remote desktop"><RemotePc /></SevenSlot>
    <SevenSlot $open aria-label="UiPath Robot"><Badge text="Ui" bg="#0067df" size={32} fs={19} /></SevenSlot>
    <SevenSlot $open aria-label="UiPath Studio"><Badge text="Ui" bg="#00489d" size={32} fs={19} /></SevenSlot>
    <Tray $gap={9}>
      <Arrow d="M0 6h8L4 2z" />
      <FlagGlyph /><NetGlyph /><SoundGlyph muted />
      <Clock>6:16 PM<br />8/31/2020</Clock>
      <ShowDesktop aria-label="Show desktop" />
    </Tray>
  </SevenBar>
);

const RightTaskbar = () => (
  <TenBar>
    <TenSlot aria-label="Start"><FaWindows size={17} /></TenSlot>
    <TenSlot aria-label="Search"><svg width="18" height="18" viewBox="0 0 18 18" fill="none" stroke="#fff"><circle cx="11" cy="7" r="5.500" strokeWidth="1.300" /><path d="M7 11l-6 6" strokeWidth="1.500" /></svg></TenSlot>
    <TenSlot aria-label="Task view"><svg width="20" height="16" viewBox="0 0 20 16" fill="none" stroke="#fff"><path d="M4.500 1.500h11v13h-11zM2.500 3.500h-2v9h2M17.500 3.500h2v9h-2" /></svg></TenSlot>
    <TenSlot $open aria-label="Explorer"><Explorer flat /></TenSlot>
    <TenSlot aria-label="Chrome"><ChromeIcon size={23} /></TenSlot>
    <TenSlot $open aria-label="UiPath Robot"><Badge text="Ui" bg="#f04e23" size={24} fs={14} /></TenSlot>
    <TenSlot $open aria-label="UiPath Studio"><Badge text="Ui" bg="#00489d" size={24} fs={14} /></TenSlot>
    <TenSlot $focus aria-label="Chrome window"><ChromeIcon size={23} /></TenSlot>
    <Tray $gap={9}>
      <svg width="12" height="8" viewBox="0 0 12 8" fill="none" stroke="#fff"><path d="M1 7l5-5 5 5" strokeWidth="1.300" /></svg>
      <NetGlyph /><SoundGlyph />
      <Clock>6:16 PM<br />8/31/2020</Clock>
      <svg width="36" height="28" viewBox="0 0 36 28"><path d="M9 3h16v12h-9l-4 4v-4H9z" fill="#fff" /><path d="M12 6h10M12 9h10M12 12h7" stroke="#000" /><circle cx="25" cy="18" r="8" fill="#444" stroke="#999" /><text x="25" y="22" textAnchor="middle" fontFamily="Open Sans, sans-serif" fontSize="11" fill="#fff">1</text></svg>
      <Peek />
    </Tray>
  </TenBar>
);

const PageTab = ({ glass }: { glass?: boolean }) => (
  <>
    <BrowserTab>
      <MdPublic size={16} color="#5f6368" />
      <TabTitle>192.168.180.52/crm.contactcente</TabTitle>
      <BareButton aria-label="Close tab"><MdClose size={14} /></BareButton>
    </BrowserTab>
    <NewTab $glass={glass} aria-label="New tab"><MdAdd size={18} /></NewTab>
    <Push />
  </>
);

export default function App() {
  return (
    <Desktops>
      <Global />
      <Desktop>
        <TabStrip $glass>
          <PageTab glass />
          <AeroButtons>
            <AeroButton $kind="min" aria-label="Minimize"><Minus s={3} /></AeroButton>
            <AeroButton $kind="max" aria-label="Restore"><Restore /></AeroButton>
            <AeroButton $kind="close" aria-label="Close"><Cross s={3} w={9} /></AeroButton>
          </AeroButtons>
        </TabStrip>
        <NavBar>
          <AddressLine id="left" />
          <Extension aria-label="McAfee"><Shield /></Extension>
          <Extension aria-label="UiPath"><Badge text="Ui" bg="#1a66b3" fs={10} /></Extension>
          <Extension aria-label="Extensions"><MdExtension size={17} /></Extension>
          <Extension aria-label="Profile"><Avatar $color="#0097a7">A</Avatar></Extension>
          <NavButton aria-label="Menu"><MdMoreVert size={18} /></NavButton>
        </NavBar>
        <Bookmarks>
          {leftMarks.map((m) => <BookmarkItem key={m[1]} mark={m} />)}
          <Push />
          <BookmarkRule />
          <BookmarkItem mark={[<Folder />, "Other bookmarks", 92]} />
        </Bookmarks>
        <ContactCenter id="left" tabs={leftTabs} seconds="28" cols={leftCols} thumb={90} logout>
          <Pager>
            <PageButtons>
              <PageButton aria-label="First page"><Arrow d="M0 0h1.500v8H0zM8 0v8L2 4z" /></PageButton>
              <PageButton aria-label="Previous page"><Arrow d="M7 0v8L1 4z" /></PageButton>
              <PageButton $on>0</PageButton>
              <PageButton aria-label="Next page"><Arrow d="M1 0v8l6-4z" /></PageButton>
              <PageButton aria-label="Last page"><Arrow d="M6.500 0H8v8H6.500zM0 0v8l6-4z" /></PageButton>
            </PageButtons>
            No items to display
          </Pager>
        </ContactCenter>
        <LeftTaskbar />
      </Desktop>
      <Desktop>
        <TabStrip>
          <PageTab />
          <FlatButtons>
            <FlatButton aria-label="Minimize"><Minus /></FlatButton>
            <FlatButton aria-label="Restore"><Restore /></FlatButton>
            <FlatButton aria-label="Close"><Cross /></FlatButton>
          </FlatButtons>
        </TabStrip>
        <NavBar>
          <AddressLine id="right" />
          <Extension aria-label="Screenshot"><MdPhotoCamera size={17} color="#8d9093" /></Extension>
          <Extension aria-label="Window"><PanelIcon /></Extension>
          <Extension aria-label="Fast forward"><FastIcon /></Extension>
          <Extension aria-label="Ad blocker"><StopHand /></Extension>
          <Extension aria-label="Extensions"><MdExtension size={17} /></Extension>
          <Paused><Avatar $color="#455a64">M</Avatar>Paused</Paused>
          <NavButton $disc aria-label="Menu"><MdMoreVert size={18} /></NavButton>
        </NavBar>
        <Bookmarks>
          {rightMarks.map((m, i) => <BookmarkItem key={i} mark={m} />)}
        </Bookmarks>
        <ContactCenter id="right" tabs={rightTabs} seconds="58" cols={rightCols} thumb={62} />
        <RightTaskbar />
        <RemoteBar>
          <PinButton aria-label="Pin"><svg width="14" height="10" viewBox="0 0 14 10" fill="none" stroke="#fff" strokeWidth="2"><path d="M0 5h5M6 0v10M7 3h5v4H7M13 0v10" /></svg></PinButton>
          <svg width="22" height="14" viewBox="0 0 22 14"><path d="M6 14v-3M9 14V8M12 14V5M15 14V1" stroke="#fff" strokeWidth="2" /></svg>
          <RemoteName>192.168.181.163</RemoteName>
          <RemoteButton aria-label="Minimize"><Minus w={7} s={2} /></RemoteButton>
          <RemoteButton aria-label="Restore"><Restore /></RemoteButton>
          <RemoteButton aria-label="Close"><Cross s={2} w={9} /></RemoteButton>
        </RemoteBar>
        <Popup>
          <PopupClose aria-label="Close"><MdClose size={15} /></PopupClose>
          <PopupTitle>Restore pages?</PopupTitle>
          <PopupText>Chrome didn't shut down correctly.</PopupText>
          <PopupActions>
            <PopupButton $primary>Restore</PopupButton>
            <PopupButton>Open startup pages</PopupButton>
          </PopupActions>
        </Popup>
        <Watermark>
          <WatermarkTitle>Activate Windows</WatermarkTitle>
          Go to Settings to activate Windows.
        </Watermark>
      </Desktop>
    </Desktops>
  );
}
